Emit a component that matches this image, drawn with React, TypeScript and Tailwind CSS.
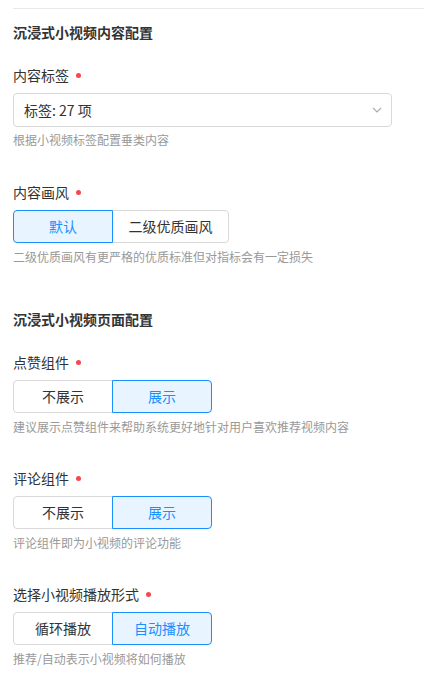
import React from "react";

const font = { fontFamily: '"Noto Sans CJK SC", "Noto Sans", sans-serif' };

function Label({ text }: { text: string }) {
  return (
    <div className="flex items-center h-[22px] text-[14px] leading-[22px] text-[#333]">
      <span>{text}</span>
      <span className="ml-[7px] w-[5px] h-[5px] rounded-full bg-[#f5474f]" />
    </div>
  );
}

function Help({ text, mt }: { text: string; mt: string }) {
  return <div className={"h-[20px] text-[12px] leading-[20px] text-[#999] " + mt}>{text}</div>;
}

function Seg({ options, selected }: { options: { label: string; w: string }[]; selected: number }) {
  return (
    <div className="mt-[7px] flex">
      {options.map((o, i) => {
        const sel = i === selected;
        const cls =
          "h-[33px] flex items-center justify-center text-[14px] border " +
          (sel ? "relative z-10 border-[#1890ff] bg-[#e8f4ff] text-[#1890ff] " : "border-[#d9d9d9] bg-white text-[#333] ") +
          (i === 0 ? "rounded-l-[4px] " : "-ml-px ") +
          (i === options.length - 1 ? "rounded-r-[4px] " : "") +
          o.w;
        return (
          <div key={i} className={cls}>
            {o.label}
          </div>
        );
      })}
    </div>
  );
}

export default function App() {
  return (
    <div className="bg-white w-[424px] h-[684px] overflow-hidden pl-[13px]" style={font}>
      <div className="mt-[8px] h-px bg-[#e8e8e8]" />
      <div className="mt-[12px] h-[22px] text-[14px] leading-[22px] font-bold text-[#333]">沉浸式小视频内容配置</div>

      <div className="mt-[21px]">
        <Label text="内容标签" />
        <div className="mt-[7px] w-[379px] h-[34px] border border-[#d9d9d9] rounded-[4px] flex items-center justify-between pl-[10px] pr-[9px] text-[14px] text-[#333]">
          <span>标签: 27 项</span>
          <svg width="10" height="6" viewBox="0 0 10 6" fill="none">
            <path d="M1 1L5 5L9 1" stroke="#aaa" strokeWidth="1.1" />
          </svg>
        </div>
        <Help text="根据小视频标签配置垂类内容" mt="mt-[3px]" />
      </div>

      <div className="mt-[31px]">
        <Label text="内容画风" />
        <Seg
          options={[
            { label: "默认", w: "w-[100px]" },
            { label: "二级优质画风", w: "w-[117px]" },
          ]}
          selected={0}
        />
        <Help text="二级优质画风有更严格的优质标准但对指标会有一定损失" mt="mt-[4px]" />
      </div>

      <div className="mt-[41px] h-[22px] text-[14px] leading-[22px] font-bold text-[#333]">沉浸式小视频页面配置</div>

      <div className="mt-[21px]">
        <Label text="点赞组件" />
        <Seg
          options={[
            { label: "不展示", w: "w-[100px]" },
            { label: "展示", w: "w-[100px]" },
          ]}
          selected={1}
        />
        <Help text="建议展示点赞组件来帮助系统更好地针对用户喜欢推荐视频内容" mt="mt-[4px]" />
      </div>

      <div className="mt-[30px]">
        <Label text="评论组件" />
        <Seg
          options={[
            { label: "不展示", w: "w-[100px]" },
            { label: "展示", w: "w-[100px]" },
          ]}
          selected={1}
        />
        <Help text="评论组件即为小视频的评论功能" mt="mt-[4px]" />
      </div>

      <div className="mt-[30px]">
        <Label text="选择小视频播放形式" />
        <Seg
          options={[
            { label: "循环播放", w: "w-[100px]" },
            { label: "自动播放", w: "w-[100px]" },
          ]}
          selected={1}
        />
        <Help text="推荐/自动表示小视频将如何播放" mt="mt-[4px]" />
      </div>
    </div>
  );
}
